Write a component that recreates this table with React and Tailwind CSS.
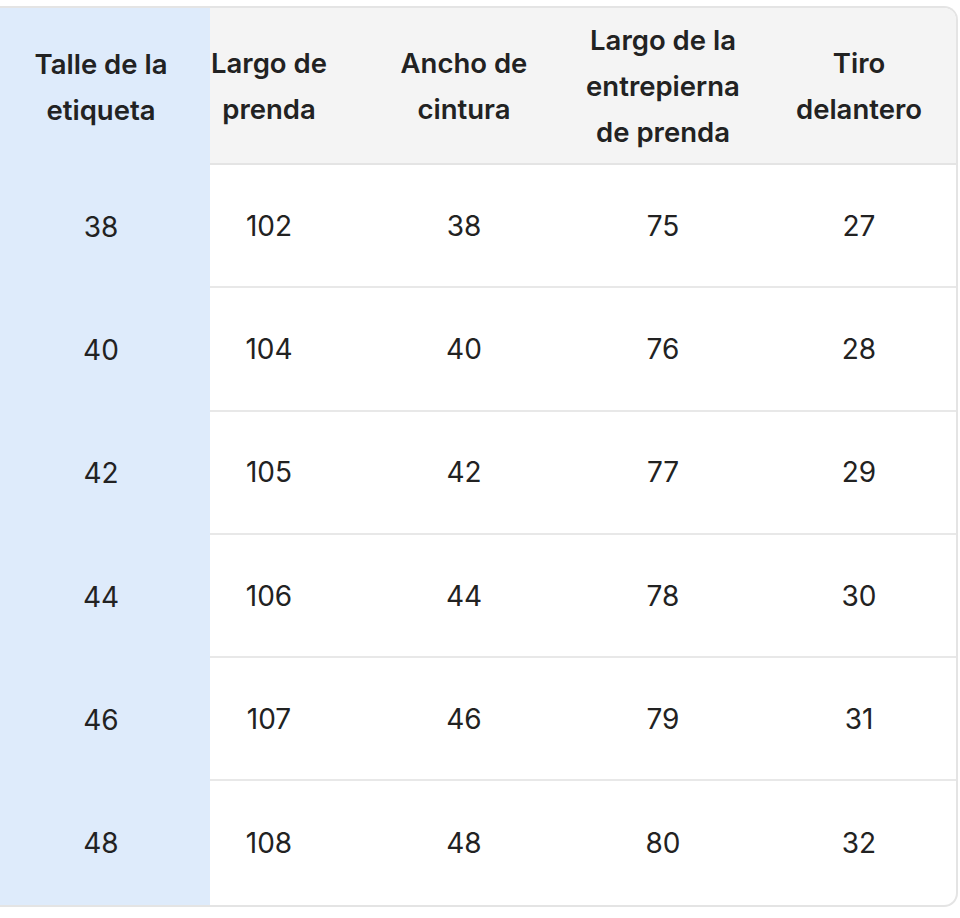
import React from 'react';

const headers = [
  ['Largo de', 'prenda'],
  ['Ancho de', 'cintura'],
  ['Largo de la', 'entrepierna', 'de prenda'],
  ['Tiro', 'delantero'],
];

const rows = [
  ['38', '102', '38', '75', '27'],
  ['40', '104', '40', '76', '28'],
  ['42', '105', '42', '77', '29'],
  ['44', '106', '44', '78', '30'],
  ['46', '107', '46', '79', '31'],
  ['48', '108', '48', '80', '32'],
];

// widths and side paddings so the text centres land where the columns sit
const cols = [
  'w-[130px] pr-[12px]',
  'w-[240px] pl-[8px]',
  'w-[170px] pr-[4px]',
  'w-[206px] pl-[12px]',
];

const App = () => {
  return (
    <div className="w-[960px] h-[918px] bg-white pt-[6px]" style={{ fontFamily: 'Inter, "Open Sans", sans-serif' }}>
      <div className="w-[958px] border-2 border-l-0 border-[#e4e4e4] rounded-r-[14px] overflow-hidden text-[#222222]">
        <div className="flex h-[157px]">
          <div className="w-[210px] pr-[8px] bg-[#deebfb] flex flex-col items-center justify-center text-[27.5px] font-semibold leading-[46px]">
            <span className="whitespace-nowrap">Talle de la</span>
            <span className="whitespace-nowrap">etiqueta</span>
          </div>
          <div className="flex flex-1 bg-[#f4f4f4] border-b-2 border-[#e4e4e4]">
            {headers.map((lines, i) => (
              <div key={i} className={`${cols[i]} flex flex-col items-center justify-center text-[27.5px] font-semibold leading-[46px]`}>
                {lines.map(l => (
                  <span key={l} className="whitespace-nowrap">{l}</span>
                ))}
              </div>
            ))}
          </div>
        </div>
        {rows.map((row, r) => (
          <div key={r} className="flex h-[123.3px]">
            <div className="w-[210px] pr-[8px] bg-[#deebfb] flex items-center justify-center text-[28px]">
              {row[0]}
            </div>
            <div className={`flex flex-1 ${r < rows.length - 1 ? 'border-b-2 border-[#e8e8e8]' : ''}`}>
              {row.slice(1).map((v, i) => (
                <div key={i} className={`${cols[i]} flex items-center justify-center text-[28px]`}>
                  {v}
                </div>
              ))}
            </div>
          </div>
        ))}
      </div>
    </div>
  );
};

export default App;
